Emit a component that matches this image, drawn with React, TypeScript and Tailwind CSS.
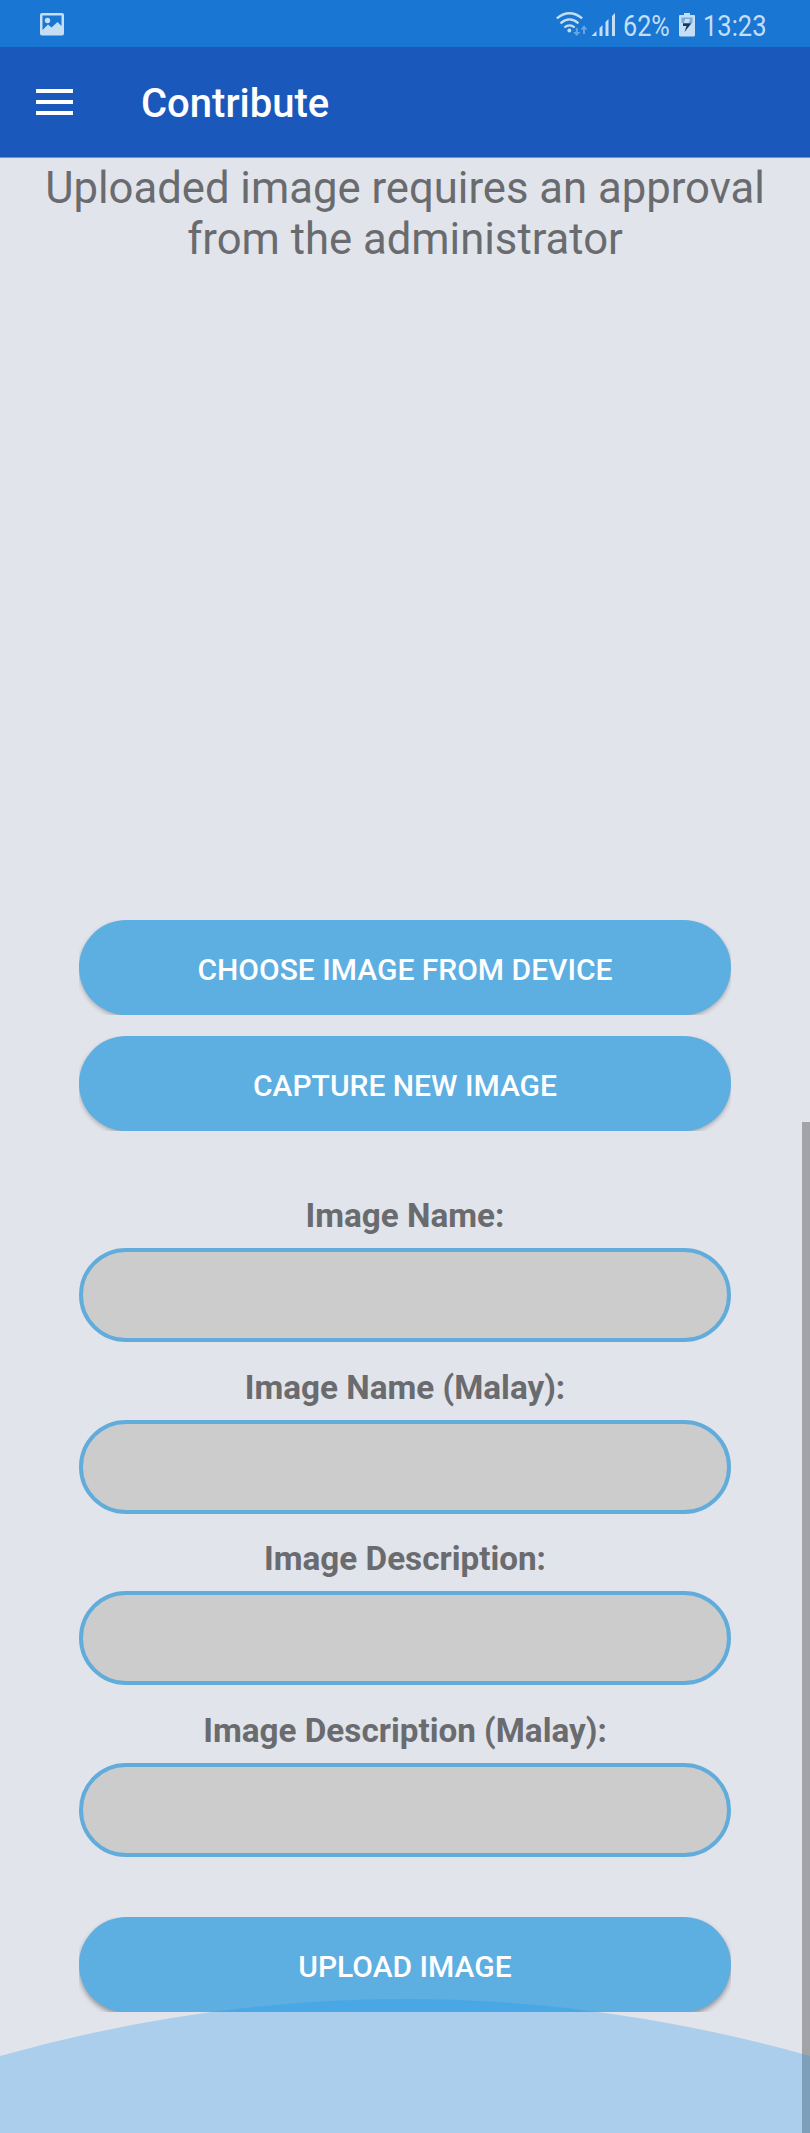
import React from "react";

function StatusBar() {
  return (
    <div className="flex h-[47px] items-start bg-[#1a76d3] text-[#c3def5]">
      <svg className="mt-[13px] ml-[40px] h-[23px] w-[24px] shrink-0" viewBox="0 0 24 23" fill="currentColor">
        <path
          fillRule="evenodd"
          d="M2 0H22Q24 0 24 2V20.500Q24 22.500 22 22.500H2Q0 22.500 0 20.500V2Q0 0 2 0ZM2.500 2.500V17L8 11.500L11.500 14.500L17.500 9L21.500 13V2.500Z"
        />
        <circle cx="7.500" cy="7.500" r="2.700" />
      </svg>
      <svg className="mt-[11px] ml-[491px] h-[27px] w-[62px] shrink-0" viewBox="0 0 62 27" fill="none" stroke="currentColor">
        <path d="M1.800 7.400Q14.500 -2.800 27.200 7.400" strokeWidth="2.300" />
        <path d="M5.500 12.300Q14.500 4.600 23.500 12.300" strokeWidth="2.200" />
        <path d="M9.300 16.500Q14.500 12.300 19.700 16.500" strokeWidth="2.200" />
        <circle cx="14.300" cy="19.500" r="1.900" fill="currentColor" stroke="none" />
        <g fill="currentColor" stroke="none" opacity="0.450">
          <path d="M20.800 17H22.800V21H25.500L21.800 25L18.100 21H20.800Z" />
          <path d="M28 23H30V18.500H32.600L29 14.300L25.400 18.500H28Z" />
        </g>
        <g fill="currentColor" stroke="none">
          <path d="M36.500 25L41.500 20V25Z" />
          <path d="M44.500 17L47.500 14V25H44.500Z" />
          <path d="M50.500 11L53.500 8V25H50.500Z" />
          <path d="M57 5L60 2V25H57Z" />
        </g>
      </svg>
      <span className="mt-[8px] ml-[6px] block w-[48px] origin-left scale-x-[0.840] text-[30px] leading-[35px] whitespace-nowrap">62%</span>
      <svg className="mt-[13px] ml-[8px] h-[24px] w-[16px] shrink-0" viewBox="0 0 16 24">
        <path d="M5 0H11V2H15Q16 2 16 3V22Q16 23.500 14.500 23.500H1.500Q0 23.500 0 22V3Q0 2 1 2H5Z" fill="#c3def5" />
        <path d="M2.500 4.500H13.500V10H2.500Z" fill="#75ade3" />
        <path d="M6.200 6H11L9.700 10.300H4.800Z" fill="#c3def5" />
        <path d="M4 10.300H12.500L5.500 19L7.500 13H4Z" fill="#173a5c" />
      </svg>
      <span className="mt-[8px] ml-[8px] block origin-left scale-x-[0.850] text-[30px] leading-[35px] whitespace-nowrap">13:23</span>
    </div>
  );
}

function ActionButton({ children, raised = false }: { children: React.ReactNode; raised?: boolean }) {
  const shadow = raised ? "shadow-[0_3px_5px_rgba(0,0,0,0.350)]" : "shadow-[0_2px_4px_rgba(0,0,0,0.250)]";
  return (
    <div className="h-[95px] w-[652px] overflow-hidden">
      <button className={`block h-[95px] w-full rounded-full bg-[#5daee1] pt-[3px] text-[30px] font-medium text-white ${shadow}`}>
        {children}
      </button>
    </div>
  );
}

function Field({ label }: { label: string }) {
  return (
    <label className="flex h-[171.500px] flex-col items-center">
      <span className="h-[53px] text-[33.250px] leading-[42px] font-bold">{label}</span>
      <input className="h-[94px] w-[652px] rounded-full border-4 border-[#62acdc] bg-[#ccc] px-10 outline-none" />
    </label>
  );
}

export default function App() {
  return (
    <div className="relative flex h-[2133px] w-[810px] flex-col overflow-hidden bg-[#e1e4eb] font-['Roboto','Liberation_Sans',sans-serif] text-[#6a6b6e]">
      <StatusBar />
      <header className="flex h-[111px] items-center border-b border-[#6f93cf] bg-[#1b58bb] text-white">
        <button className="ml-[36px] flex w-[37px] flex-col gap-[7px]">
          <span className="h-[4px] w-full bg-current" />
          <span className="h-[4px] w-full bg-current" />
          <span className="h-[4px] w-full bg-current" />
        </button>
        <h1 className="ml-[68px] pt-[4px] text-[40px] leading-[48px] font-medium">Contribute</h1>
      </header>
      <main className="flex flex-col items-center">
        <p className="h-[762px] pt-[5px] text-center text-[43.650px] leading-[51px]">
          Uploaded image requires an approval
          <br />
          from the administrator
        </p>
        <div className="flex flex-col gap-[21px]">
          <ActionButton>CHOOSE IMAGE FROM DEVICE</ActionButton>
          <ActionButton>CAPTURE NEW IMAGE</ActionButton>
        </div>
        <form className="pt-[64px]">
          <Field label="Image Name:" />
          <Field label="Image Name (Malay):" />
          <Field label="Image Description:" />
          <Field label="Image Description (Malay):" />
        </form>
        <div className="pt-[36px]">
          <ActionButton raised>UPLOAD IMAGE</ActionButton>
        </div>
      </main>
      <div className="absolute right-0 bottom-0 h-[1011px] w-[8px] bg-[#a2a3a6]" />
      <svg className="pointer-events-none absolute bottom-0 left-0 h-[135px] w-[810px]" viewBox="0 0 810 135">
        <path d="M0 58Q405 -56 810 58V135H0Z" fill="#1b95f0" fillOpacity="0.270" />
      </svg>
    </div>
  );
}
